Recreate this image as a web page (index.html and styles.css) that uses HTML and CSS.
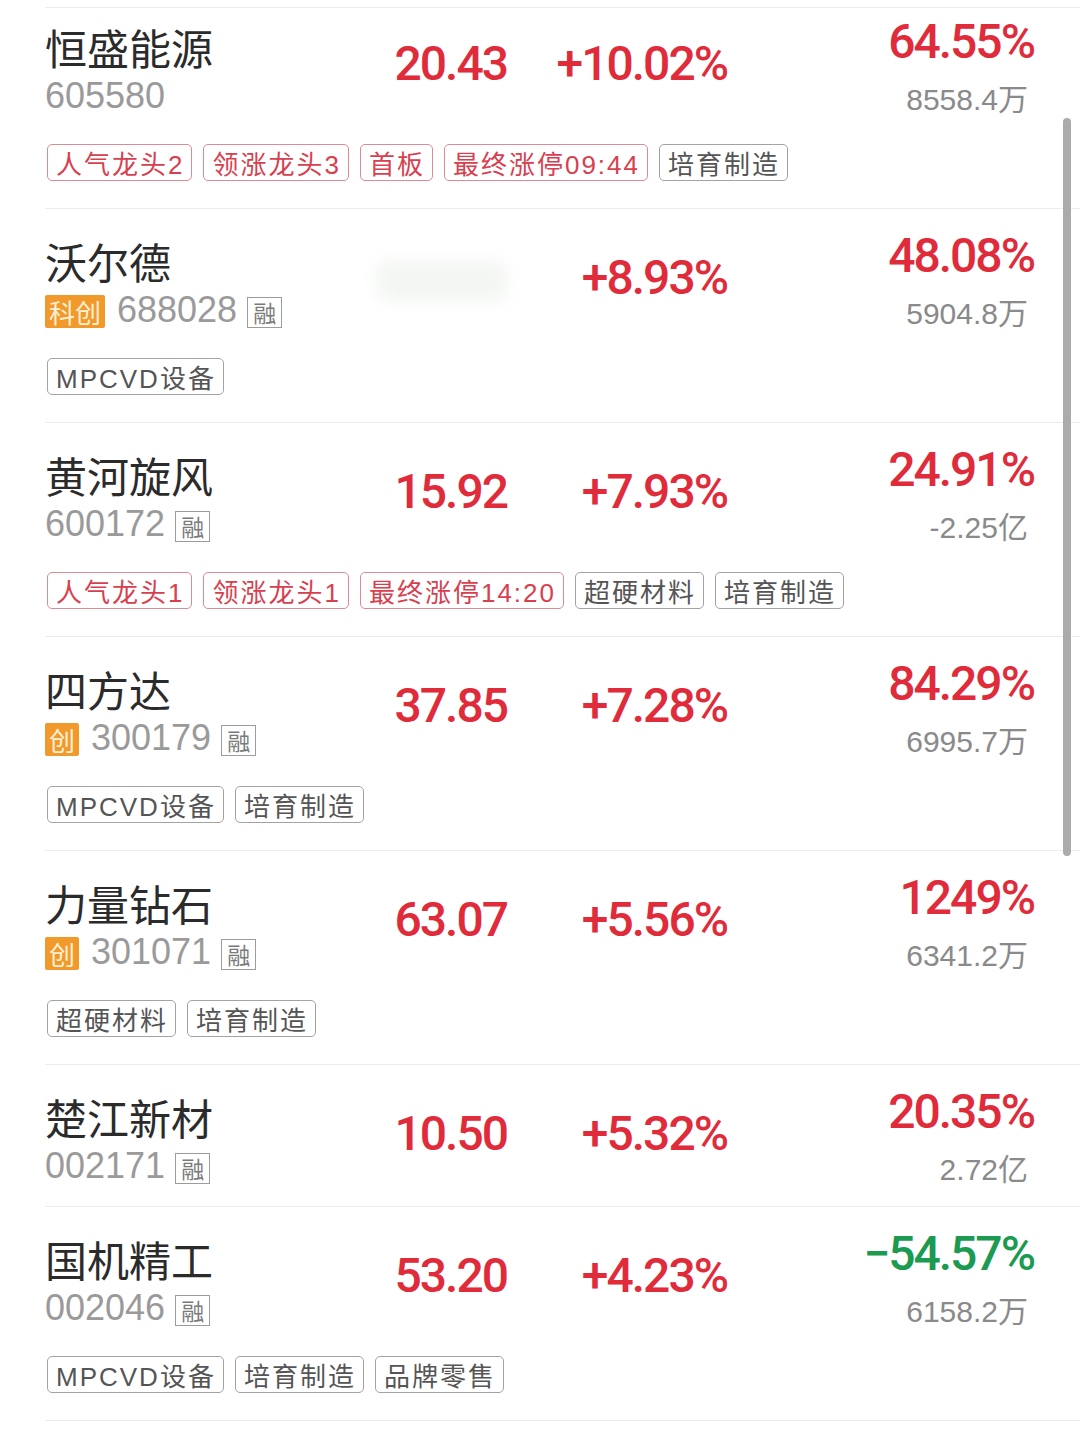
FILE: index.html
```html
<!DOCTYPE html>
<html lang="zh-CN">
<head>
    <meta charset="UTF-8" />
    <meta name="viewport" content="width=device-width, initial-scale=1.0" />
    <title>涨幅榜</title>
    <link rel="stylesheet" href="styles.css">
</head>
<body>
    <div class="list">
        <!-- 恒盛能源 -->
        <div class="row first">
            <div class="head">
                <div class="stock">
                    <div class="name">恒盛能源</div>
                    <div class="code"><span>605580</span></div>
                </div>
                <div class="price up">20.43</div>
                <div class="chg up">+10.02%</div>
                <div class="turn">
                    <div class="pct up">64.55%</div>
                    <div class="vol">8558.4万</div>
                </div>
            </div>
            <div class="tags">
                <span class="tag hot">人气龙头2</span>
                <span class="tag hot">领涨龙头3</span>
                <span class="tag hot">首板</span>
                <span class="tag hot">最终涨停09:44</span>
                <span class="tag">培育制造</span>
            </div>
        </div>

        <!-- 沃尔德 -->
        <div class="row">
            <div class="head">
                <div class="stock">
                    <div class="name">沃尔德</div>
                    <div class="code"><span class="board">科创</span><span>688028</span><span class="rong">融</span></div>
                </div>
                <div class="price"><span class="blur"></span></div>
                <div class="chg up">+8.93%</div>
                <div class="turn">
                    <div class="pct up">48.08%</div>
                    <div class="vol">5904.8万</div>
                </div>
            </div>
            <div class="tags">
                <span class="tag">MPCVD设备</span>
            </div>
        </div>

        <!-- 黄河旋风 -->
        <div class="row">
            <div class="head">
                <div class="stock">
                    <div class="name">黄河旋风</div>
                    <div class="code"><span>600172</span><span class="rong">融</span></div>
                </div>
                <div class="price up">15.92</div>
                <div class="chg up">+7.93%</div>
                <div class="turn">
                    <div class="pct up">24.91%</div>
                    <div class="vol">-2.25亿</div>
                </div>
            </div>
            <div class="tags">
                <span class="tag hot">人气龙头1</span>
                <span class="tag hot">领涨龙头1</span>
                <span class="tag hot">最终涨停14:20</span>
                <span class="tag">超硬材料</span>
                <span class="tag">培育制造</span>
            </div>
        </div>

        <!-- 四方达 -->
        <div class="row">
            <div class="head">
                <div class="stock">
                    <div class="name">四方达</div>
                    <div class="code"><span class="board">创</span><span>300179</span><span class="rong">融</span></div>
                </div>
                <div class="price up">37.85</div>
                <div class="chg up">+7.28%</div>
                <div class="turn">
                    <div class="pct up">84.29%</div>
                    <div class="vol">6995.7万</div>
                </div>
            </div>
            <div class="tags">
                <span class="tag">MPCVD设备</span>
                <span class="tag">培育制造</span>
            </div>
        </div>

        <!-- 力量钻石 -->
        <div class="row">
            <div class="head">
                <div class="stock">
                    <div class="name">力量钻石</div>
                    <div class="code"><span class="board">创</span><span>301071</span><span class="rong">融</span></div>
                </div>
                <div class="price up">63.07</div>
                <div class="chg up">+5.56%</div>
                <div class="turn">
                    <div class="pct up">1249%</div>
                    <div class="vol">6341.2万</div>
                </div>
            </div>
            <div class="tags">
                <span class="tag">超硬材料</span>
                <span class="tag">培育制造</span>
            </div>
        </div>

        <!-- 楚江新材 -->
        <div class="row">
            <div class="head">
                <div class="stock">
                    <div class="name">楚江新材</div>
                    <div class="code"><span>002171</span><span class="rong">融</span></div>
                </div>
                <div class="price up">10.50</div>
                <div class="chg up">+5.32%</div>
                <div class="turn">
                    <div class="pct up">20.35%</div>
                    <div class="vol">2.72亿</div>
                </div>
            </div>
        </div>

        <!-- 国机精工 -->
        <div class="row last">
            <div class="head">
                <div class="stock">
                    <div class="name">国机精工</div>
                    <div class="code"><span>002046</span><span class="rong">融</span></div>
                </div>
                <div class="price up">53.20</div>
                <div class="chg up">+4.23%</div>
                <div class="turn">
                    <div class="pct down">−54.57%</div>
                    <div class="vol">6158.2万</div>
                </div>
            </div>
            <div class="tags">
                <span class="tag">MPCVD设备</span>
                <span class="tag">培育制造</span>
                <span class="tag">品牌零售</span>
            </div>
        </div>
    </div>

    <div class="scrollbar"></div>
</body>
</html>
```

FILE: styles.css
```css
/* Basic reset */
* {
    margin: 0;
    padding: 0;
    box-sizing: border-box;
}

body {
    font-family: "Liberation Sans", "Noto Sans CJK SC", sans-serif;
    background: #fff;
    color: #333;
    width: 1080px;
    height: 1435px;
    overflow: hidden;
    position: relative;
}

/* List of stocks */
.list {
    padding-top: 7px;
}

.row {
    margin-left: 45px;
    padding: 22px 46px 21px 0;
    border-top: 1px solid #ececec;
}

/* first row is cut off at the top of the screen */
.row.first {
    padding-top: 9px;
}

.row.last {
    border-bottom: 1px solid #ececec;
}

.head {
    display: flex;
    height: 98px;
}

/* Name + code on the left */
.stock {
    width: 315px;
    display: flex;
    flex-direction: column;
}

.name {
    font-family: "Noto Sans CJK SC", sans-serif;
    font-size: 42px;
    line-height: 60px;
    color: #2b2b2b;
    white-space: nowrap;
}

.code {
    display: flex;
    align-items: center;
    height: 38px;
    font-size: 36px;
    color: #9a9a9a;
    white-space: nowrap;
}

.board {
    display: inline-flex;
    align-items: center;
    justify-content: center;
    height: 33px;
    padding: 0 4px;
    margin-right: 12px;
    margin-top: 3px;
    background: #f2992c;
    color: #fff1d6;
    font-family: "Noto Sans CJK SC", sans-serif;
    font-size: 26px;
    border-radius: 2px;
}

.rong {
    display: inline-flex;
    align-items: center;
    justify-content: center;
    width: 35px;
    height: 31px;
    margin-left: 10px;
    margin-top: 4px;
    border: 1.5px solid #9c9c9c;
    color: #7a7a7a;
    font-family: "Noto Sans CJK SC", sans-serif;
    font-size: 23px;
}

/* Numbers */
.price,
.chg,
.pct {
    font-family: Roboto, "Liberation Sans", sans-serif;
    font-weight: 500;
    font-size: 48px;
    letter-spacing: -2px;
    line-height: 1;
    white-space: nowrap;
}

.price {
    width: 147px;
    display: flex;
    align-items: center;
    justify-content: flex-end;
    padding-bottom: 4px;
}

.chg {
    width: 220px;
    display: flex;
    align-items: center;
    justify-content: flex-end;
    padding-bottom: 4px;
}

.turn {
    width: 307px;
    display: flex;
    flex-direction: column;
    align-items: flex-end;
}

.pct {
    line-height: 50px;
}

.vol {
    margin-top: 18px;
    padding-right: 6px;
    font-size: 30px;
    line-height: 30px;
    color: #8a8a8a;
    white-space: nowrap;
}

.up {
    color: #e02b3b;
}

.down {
    color: #1b9a52;
}

/* blurred price placeholder */
.blur {
    display: block;
    width: 130px;
    height: 40px;
    margin-top: 6px;
    background: #eef3ee;
    border-radius: 6px;
    filter: blur(8px);
    opacity: 0.7;
}

/* Tags under each stock */
.tags {
    display: flex;
    gap: 11px;
    margin: 29px 0 6px 2px;
}

.tag {
    display: inline-flex;
    align-items: center;
    height: 37px;
    padding: 0 7px 0 8px;
    border: 1px solid #a3a3a3;
    border-radius: 5px;
    font-size: 26px;
    letter-spacing: 2px;
    color: #555;
    white-space: nowrap;
}

.tag.hot {
    border-color: #de8a92;
    color: #d8404f;
}

/* scroll indicator over the list */
.scrollbar {
    position: absolute;
    left: 1063px;
    top: 118px;
    width: 8px;
    height: 738px;
    border-radius: 4px;
    background: #ababab;
}
```
